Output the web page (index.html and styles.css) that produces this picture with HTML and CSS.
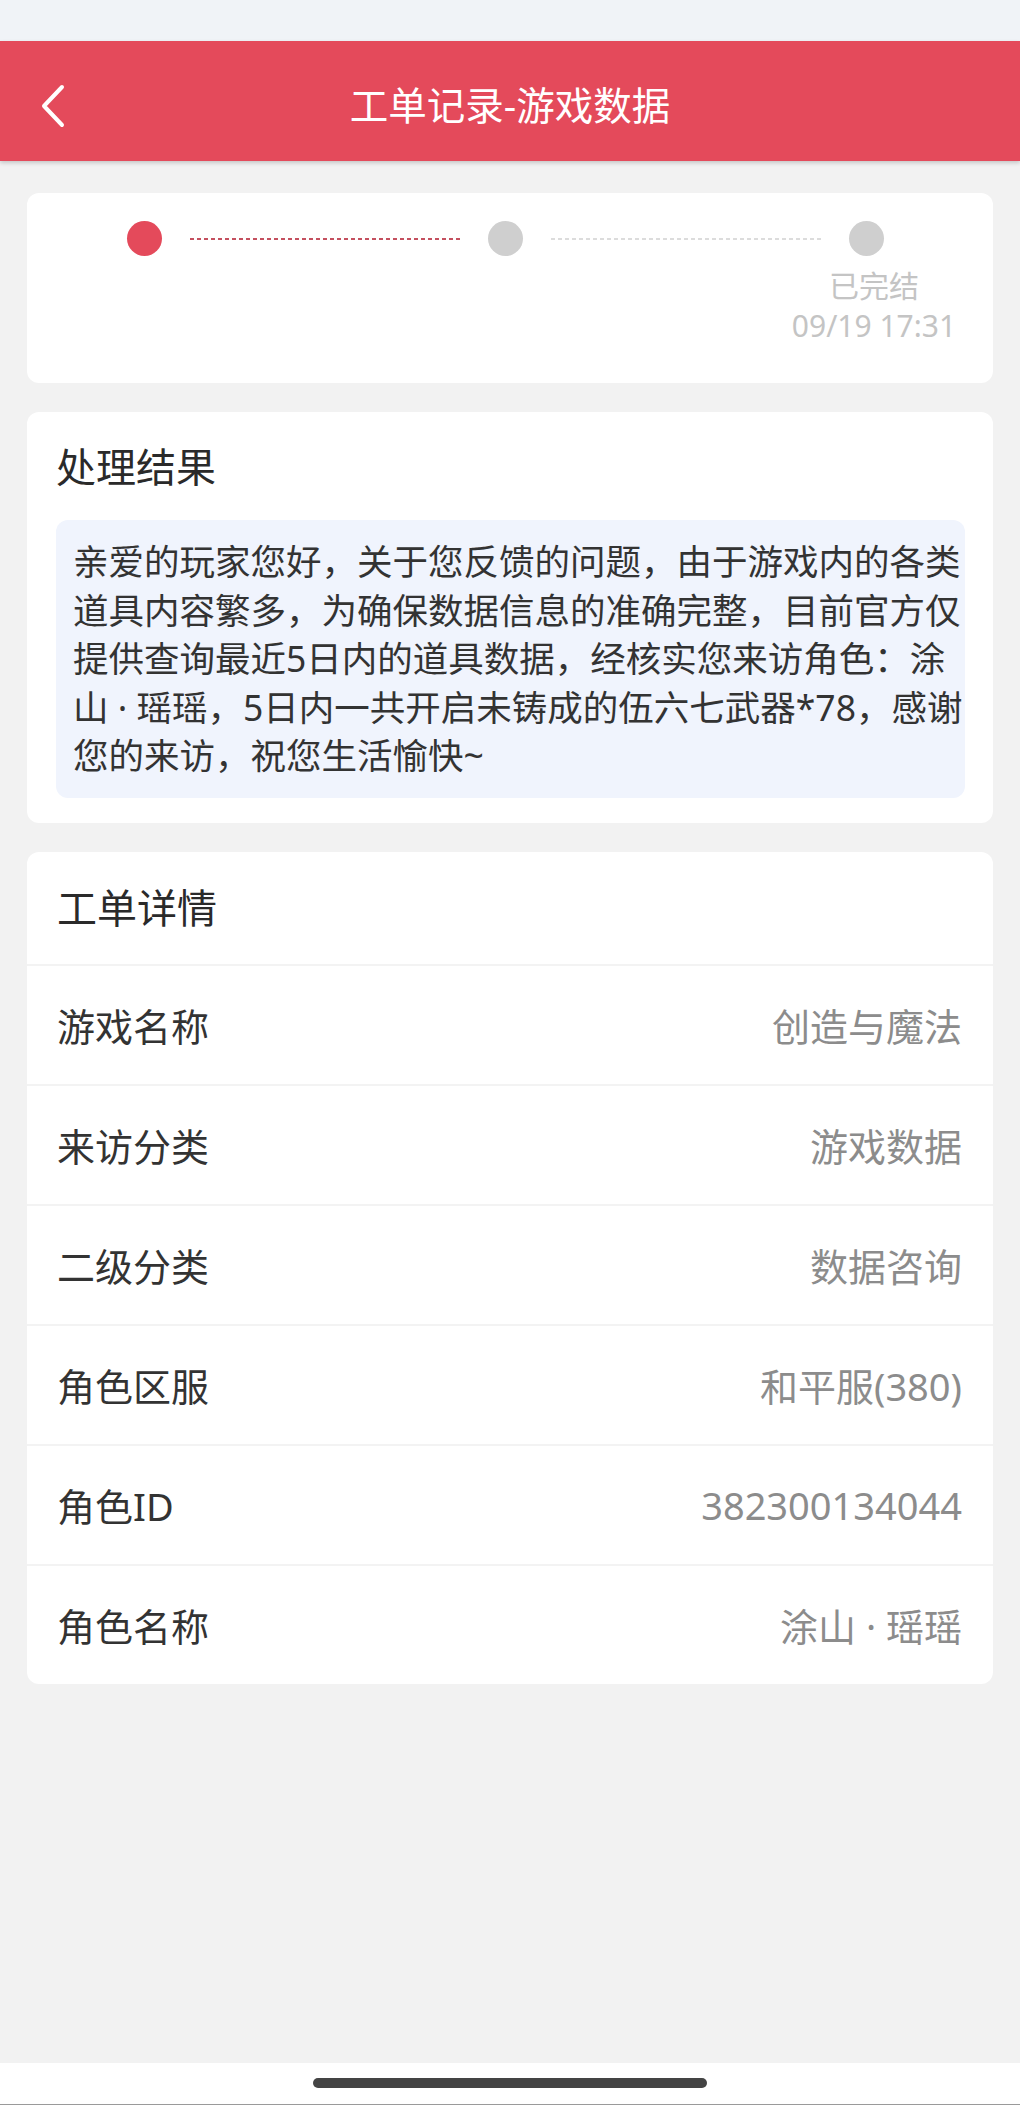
FILE: index.html
```html
<!DOCTYPE html>
<html lang="zh-CN">
<head>
  <meta charset="UTF-8">
  <meta name="viewport" content="width=device-width, initial-scale=1.0">
  <title>工单记录-游戏数据</title>
  <link rel="stylesheet" href="styles.css">
</head>
<body>
  <div class="page">
    <div class="status-bar"></div>

    <header class="nav-bar">
      <a class="back" href="#" aria-label="返回">
        <svg width="24" height="44" viewBox="0 0 24 44">
          <path d="M21 3 L3 22 L21 41" fill="none" stroke="#fff" stroke-width="4" stroke-linecap="round" stroke-linejoin="round"/>
        </svg>
      </a>
      <h1>工单记录-游戏数据</h1>
      <span></span>
    </header>

    <main class="content">
      <!-- progress -->
      <section class="card progress">
        <div class="steps">
          <span class="dot active"></span>
          <span class="link active"></span>
          <span class="dot"></span>
          <span class="link"></span>
          <span class="dot"></span>
        </div>
        <div class="step-info">
          <div class="step-text">
            <p>已完结</p>
            <p>09/19 17:31</p>
          </div>
        </div>
      </section>

      <!-- result -->
      <section class="card result">
        <h2 class="card-title">处理结果</h2>
        <div class="reply">
          亲爱的玩家您好，关于您反馈的问题，由于游戏内的各类<br>道具内容繁多，为确保数据信息的准确完整，目前官方仅<br>提供查询最近5日内的道具数据，经核实您来访角色：涂<br>山 · 瑶瑶，5日内一共开启未铸成的伍六七武器*78，感谢<br>您的来访，祝您生活愉快~
        </div>
      </section>

      <!-- details -->
      <section class="card details">
        <h2 class="card-title details-title">工单详情</h2>
        <div class="row"><span class="label">游戏名称</span><span class="value">创造与魔法</span></div>
        <div class="row"><span class="label">来访分类</span><span class="value">游戏数据</span></div>
        <div class="row"><span class="label">二级分类</span><span class="value">数据咨询</span></div>
        <div class="row"><span class="label">角色区服</span><span class="value">和平服(380)</span></div>
        <div class="row"><span class="label">角色ID</span><span class="value">382300134044</span></div>
        <div class="row"><span class="label">角色名称</span><span class="value">涂山 · 瑶瑶</span></div>
      </section>
    </main>

    <footer class="home-bar">
      <span class="indicator"></span>
    </footer>
  </div>
</body>
</html>
```

FILE: styles.css
```css
* {
  box-sizing: border-box;
}

body {
  margin: 0;
  padding: 0;
  font-family: "Noto Sans", "Noto Sans CJK SC", sans-serif;
  background-color: #f2f2f2;
  color: #333;
}

p,
h1,
h2 {
  margin: 0;
  font-weight: normal;
}

.page {
  display: flex;
  flex-direction: column;
  min-height: 2105px;
}

.status-bar {
  height: 41px;
  background-color: #f0f3f7;
}

.nav-bar {
  display: grid;
  grid-template-columns: 1fr auto 1fr;
  align-items: center;
  height: 120px;
  padding: 8px 41px 0;
  background-color: #e44a5b;
  box-shadow: 0 2px 4px rgba(0, 0, 0, 0.18);
  position: relative;
}

.back {
  display: flex;
  margin-top: 2px;
}

.nav-bar h1 {
  color: #fff;
  font-size: 38.5px;
  line-height: 50px;
}

.content {
  flex: 1;
  display: flex;
  flex-direction: column;
  gap: 29px;
  padding: 32px 27px;
}

.card {
  background-color: #fff;
  border-radius: 12px;
}

/* progress card */
.progress {
  height: 190px;
  padding: 28px 0 0;
}

.steps {
  display: flex;
  align-items: center;
  padding: 0 109px 0 100px;
}

.dot {
  width: 35px;
  height: 35px;
  border-radius: 50%;
  background-color: #cfcfcf;
  flex-shrink: 0;
}

.dot.active {
  background-color: #e44a5b;
}

.link {
  flex: 1;
  height: 2px;
  margin: 0 28px;
  background: repeating-linear-gradient(to right, #dcdcdc 0 4px, transparent 4px 7px);
}

.link.active {
  background: repeating-linear-gradient(to right, #c4505f 0 4px, transparent 4px 7px);
}

.step-info {
  display: flex;
  justify-content: flex-end;
  padding-right: 19px;
  margin-top: 10px;
}

.step-text {
  width: 200px;
  text-align: center;
  white-space: nowrap;
  color: #c4c4c4;
  font-size: 30px;
  line-height: 40px;
}

/* result card */
.result {
  padding: 27px 28px 25px 29px;
}

.card-title {
  font-size: 40px;
  line-height: 56px;
  color: #2a2a2a;
}

.result .card-title {
  margin-bottom: 25px;
}

.reply {
  background-color: #f0f4fd;
  border-radius: 12px;
  padding: 17px 4px 18px 17px;
  font-size: 35.5px;
  line-height: 48.5px;
  color: #333;
  white-space: nowrap;
}

/* details card */
.details {
  overflow: hidden;
}

.details-title {
  height: 112px;
  display: flex;
  align-items: center;
  padding: 0 30px;
}

.row {
  display: flex;
  justify-content: space-between;
  align-items: center;
  height: 120px;
  padding: 0 31px 0 30px;
  border-top: 2px solid #f3f3f3;
  font-size: 38px;
}

.label {
  color: #333;
}

.value {
  color: #8c8c8c;
}

.home-bar {
  height: 42px;
  background-color: #fff;
  border-bottom: 1px solid #9a9a9a;
  display: flex;
  justify-content: center;
  padding-top: 15px;
}

.indicator {
  width: 394px;
  height: 10px;
  border-radius: 5px;
  background-color: #444;
}
```
